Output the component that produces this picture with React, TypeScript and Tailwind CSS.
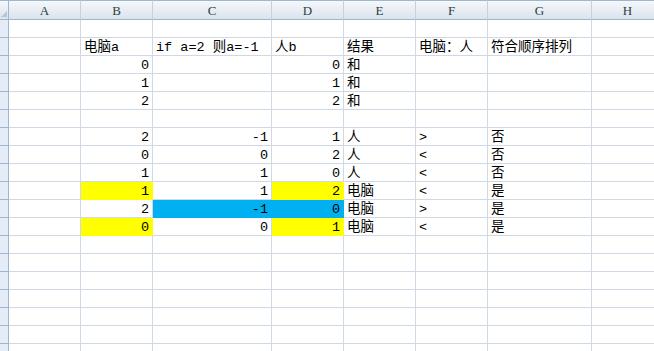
import type { ReactNode } from "react";

type Fill = "yellow" | "blue";

type Cell = {
  v?: string;
  num?: boolean;
  fill?: Fill;
};

const COLUMNS = ["A", "B", "C", "D", "E", "F", "G", "H"];
const ROW_COUNT = 19;

// sheet contents, keyed by row number then column letter
const DATA: Record<number, Record<string, Cell>> = {
  2: {
    B: { v: "电脑a" },
    C: { v: "if a=2 则a=-1" },
    D: { v: "人b" },
    E: { v: "结果" },
    F: { v: "电脑：人" },
    G: { v: "符合顺序排列" },
  },
  3: { B: { v: "0", num: true }, D: { v: "0", num: true }, E: { v: "和" } },
  4: { B: { v: "1", num: true }, D: { v: "1", num: true }, E: { v: "和" } },
  5: { B: { v: "2", num: true }, D: { v: "2", num: true }, E: { v: "和" } },
  7: {
    B: { v: "2", num: true },
    C: { v: "-1", num: true },
    D: { v: "1", num: true },
    E: { v: "人" },
    F: { v: ">" },
    G: { v: "否" },
  },
  8: {
    B: { v: "0", num: true },
    C: { v: "0", num: true },
    D: { v: "2", num: true },
    E: { v: "人" },
    F: { v: "<" },
    G: { v: "否" },
  },
  9: {
    B: { v: "1", num: true },
    C: { v: "1", num: true },
    D: { v: "0", num: true },
    E: { v: "人" },
    F: { v: "<" },
    G: { v: "否" },
  },
  10: {
    B: { v: "1", num: true, fill: "yellow" },
    C: { v: "1", num: true },
    D: { v: "2", num: true, fill: "yellow" },
    E: { v: "电脑" },
    F: { v: "<" },
    G: { v: "是" },
  },
  11: {
    B: { v: "2", num: true },
    C: { v: "-1", num: true, fill: "blue" },
    D: { v: "0", num: true, fill: "blue" },
    E: { v: "电脑" },
    F: { v: ">" },
    G: { v: "是" },
  },
  12: {
    B: { v: "0", num: true, fill: "yellow" },
    C: { v: "0", num: true },
    D: { v: "1", num: true, fill: "yellow" },
    E: { v: "电脑" },
    F: { v: "<" },
    G: { v: "是" },
  },
};

const fillClass = (fill?: Fill) => {
  if (fill === "yellow") return "bg-[#ffff00] border-[#ffff00]";
  if (fill === "blue") return "bg-[#00b0f0] border-[#00b0f0]";
  return "bg-white border-[#d0d7e5]";
};

function ColumnHeader({ children }: { children?: ReactNode }) {
  return (
    <div className="flex h-[20px] items-center justify-center border-t border-r border-b border-t-[#9eb6ce] border-r-[#c5d1df] border-b-[#9eb6ce] bg-linear-to-b from-[#f5f8fb] to-[#dbe3ed] pt-[1px] font-['Liberation_Serif',serif] text-[13px] text-[#27413e]">
      {children}
    </div>
  );
}

export default function App() {
  return (
    <div className="h-[351px] w-[654px] overflow-hidden bg-white">
      <div className="grid w-max grid-cols-[9px_72px_72px_119px_72px_72px_72px_104px_72px]">
        {/* select-all corner */}
        <div className="relative h-[20px] border-t border-r border-b border-t-[#9eb6ce] border-r-[#9eb6ce] border-b-[#9eb6ce] bg-linear-to-b from-[#f5f8fb] to-[#dbe3ed]">
          <svg
            className="absolute right-[1px] bottom-[2px]"
            width="6"
            height="6"
            viewBox="0 0 6 6"
          >
            <path d="M6 0 L6 6 L0 6 Z" fill="#b9c5d3" />
          </svg>
        </div>
        {COLUMNS.map((c) => (
          <ColumnHeader key={c}>{c}</ColumnHeader>
        ))}

        {Array.from({ length: ROW_COUNT }, (_, i) => i + 1).map((r) => (
          <RowCells key={r} row={r} />
        ))}
      </div>
    </div>
  );
}

function RowCells({ row }: { row: number }) {
  const cells = DATA[row] ?? {};
  return (
    <>
      <div className="h-[18px] border-r border-b border-[#9eb6ce] bg-[#e4ecf7]" />
      {COLUMNS.map((c) => {
        const cell = cells[c] ?? {};
        return (
          <div
            key={c}
            className={`h-[18px] overflow-hidden whitespace-nowrap border-r border-b px-[3px] pt-[3px] font-['Liberation_Mono','Noto_Sans_CJK_SC',monospace] text-[13.5px] leading-[14px] text-black ${fillClass(cell.fill)} ${cell.num ? "text-right" : "text-left"}`}
          >
            {cell.v}
          </div>
        );
      })}
    </>
  );
}
